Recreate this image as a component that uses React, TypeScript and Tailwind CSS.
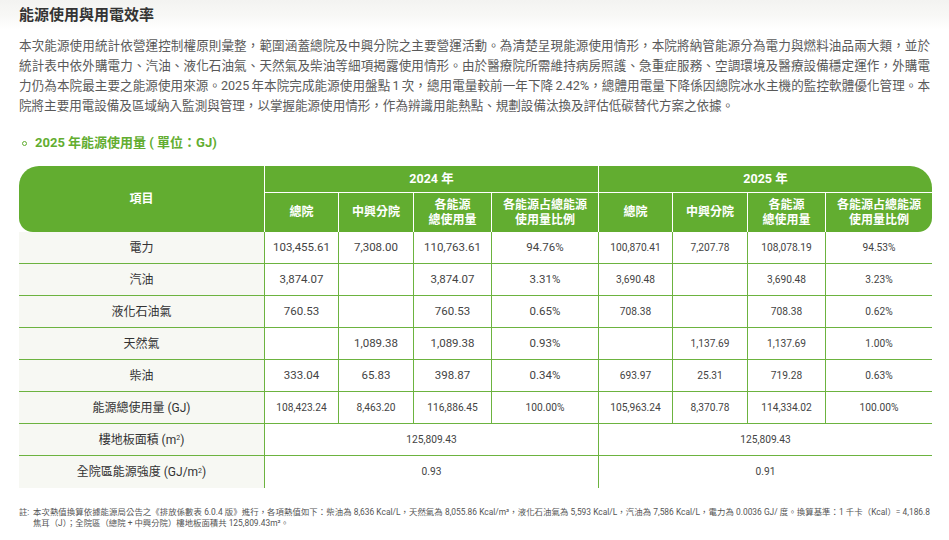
import React from "react";

type Row = {
  name: React.ReactNode;
  cells: string[];
  small?: boolean;
};

const rows: Row[] = [
  { name: "電力", cells: ["103,455.61", "7,308.00", "110,763.61", "94.76%", "100,870.41", "7,207.78", "108,078.19", "94.53%"] },
  { name: "汽油", cells: ["3,874.07", "", "3,874.07", "3.31%", "3,690.48", "", "3,690.48", "3.23%"] },
  { name: "液化石油氣", cells: ["760.53", "", "760.53", "0.65%", "708.38", "", "708.38", "0.62%"] },
  { name: "天然氣", cells: ["", "1,089.38", "1,089.38", "0.93%", "", "1,137.69", "1,137.69", "1.00%"] },
  { name: "柴油", cells: ["333.04", "65.83", "398.87", "0.34%", "693.97", "25.31", "719.28", "0.63%"] },
  {
    name: "能源總使用量 (GJ)",
    cells: ["108,423.24", "8,463.20", "116,886.45", "100.00%", "105,963.24", "8,370.78", "114,334.02", "100.00%"],
    small: true,
  },
];

const subHeads = ["總院", "中興分院", "各能源\n總使用量", "各能源占總能源\n使用量比例"];

export default function App() {
  return (
    <div className="w-[949px] h-[540px] overflow-hidden bg-white font-[Roboto,'Noto_Sans_CJK_TC',sans-serif] text-[#555]">
      {/* Title bar */}
      <div className="h-[30px] px-[19px] flex items-center bg-gradient-to-b from-[#f3f3f1] via-[#f8f8f6] to-white">
        <h2 className="text-[15px] font-bold text-[#333] leading-none">能源使用與用電效率</h2>
      </div>

      <div className="px-[19px]">
        <p className="mt-[6px] text-[12.55px] leading-[20px] text-justify text-[#595959] [word-spacing:-1px]">
          本次能源使用統計依營運控制權原則彙整，範圍涵蓋總院及中興分院之主要營運活動。為清楚呈現能源使用情形，本院將納管能源分為電力與燃料油品兩大類，並於統計表中依外購電力、汽油、液化石油氣、天然氣及柴油等細項揭露使用情形。由於醫療院所需維持病房照護、急重症服務、空調環境及醫療設備穩定運作，外購電力仍為本院最主要之能源使用來源。2025 年本院完成能源使用盤點 1 次，總用電量較前一年下降 2.42%，總體用電量下降係因總院冰水主機的監控軟體優化管理。本院將主要用電設備及區域納入監測與管理，以掌握能源使用情形，作為辨識用能熱點、規劃設備汰換及評估低碳替代方案之依據。
        </p>

        {/* Subtitle */}
        <div className="mt-[17px] h-[20px] flex items-center gap-[8px] pl-[3px] text-[#62ad30] font-bold text-[13px]">
          <span className="w-[5px] h-[5px] rounded-full border border-[#62ad30]" />
          <span>2025 年能源使用量 ( 單位：GJ)</span>
        </div>

        {/* Table */}
        <div className="mt-[13px] grid grid-cols-[245px_74px_75px_78px_107px_74px_75px_78px_107px]">
          {/* Header */}
          <div className="row-span-2 bg-[#62ad30] rounded-tl-[20px] rounded-bl-[14px] flex items-center justify-center text-white font-bold text-[12px]">
            項目
          </div>
          <div className="col-span-4 h-[26px] bg-[#62ad30] border-l border-white flex items-center justify-center text-white font-bold text-[12.5px]">
            2024 年
          </div>
          <div className="col-span-4 h-[26px] bg-[#62ad30] border-l border-white rounded-tr-[22px] flex items-center justify-center text-white font-bold text-[12.5px]">
            2025 年
          </div>
          {[0, 1].map((y) =>
            subHeads.map((h, i) => (
              <div
                key={`${y}-${i}`}
                className={`h-[40px] bg-[#62ad30] border-l border-t border-white flex items-center justify-center text-center whitespace-pre-line text-white font-bold text-[12px] leading-[15px] ${
                  y === 1 && i === 3 ? "rounded-br-[14px]" : ""
                }`}
              >
                {h}
              </div>
            ))
          )}

          {/* Body */}
          {rows.map((r, ri) => (
            <React.Fragment key={ri}>
              <div className="h-[32px] bg-[#f7f8f3] border-b border-[#6cb33f] flex items-center justify-center text-[12px] text-[#333]">
                {r.name}
              </div>
              {r.cells.map((c, ci) => (
                <div
                  key={ci}
                  className={`h-[32px] border-b border-l border-[#6cb33f] flex items-center justify-center text-[#444] ${
                    r.small || ci >= 4 ? "text-[10.2px]" : "text-[11.5px]"
                  }`}
                >
                  {c}
                </div>
              ))}
            </React.Fragment>
          ))}

          <div className="h-[32px] bg-[#f7f8f3] border-b border-[#6cb33f] flex items-center justify-center text-[12px] text-[#333]">
            <span>
              樓地板面積 (m<sup className="text-[7px]">2</sup>)
            </span>
          </div>
          <div className="col-span-4 h-[32px] border-b border-l border-[#6cb33f] flex items-center justify-center text-[10.2px] text-[#444]">
            125,809.43
          </div>
          <div className="col-span-4 h-[32px] border-b border-l border-[#6cb33f] flex items-center justify-center text-[10.2px] text-[#444]">
            125,809.43
          </div>

          <div className="h-[32px] bg-[#f7f8f3] flex items-center justify-center text-[12px] text-[#333]">
            <span>
              全院區能源強度 (GJ/m<sup className="text-[7px]">2</sup>)
            </span>
          </div>
          <div className="col-span-4 h-[32px] border-l border-[#6cb33f] flex items-center justify-center text-[10.2px] text-[#444]">
            0.93
          </div>
          <div className="col-span-4 h-[32px] border-l border-[#6cb33f] flex items-center justify-center text-[10.2px] text-[#444]">
            0.91
          </div>
        </div>

        {/* Footnote */}
        <div className="mt-[19px] flex text-[8.4px] leading-[10.7px] text-[#555]">
          <span className="shrink-0 w-[14px]">註:</span>
          <p className="text-justify">
            本次熱值換算依據能源局公告之《排放係數表 6.0.4 版》進行，各項熱值如下：柴油為 8,636 Kcal/L，天然氣為 8,055.86 Kcal/m³，液化石油氣為 5,593 Kcal/L，汽油為 7,586 Kcal/L，電力為 0.0036 GJ/ 度。換算基準：1 千卡（Kcal）= 4,186.8 焦耳（J）；全院區（總院 + 中興分院）樓地板面積共 125,809.43m²。
          </p>
        </div>
      </div>
    </div>
  );
}
